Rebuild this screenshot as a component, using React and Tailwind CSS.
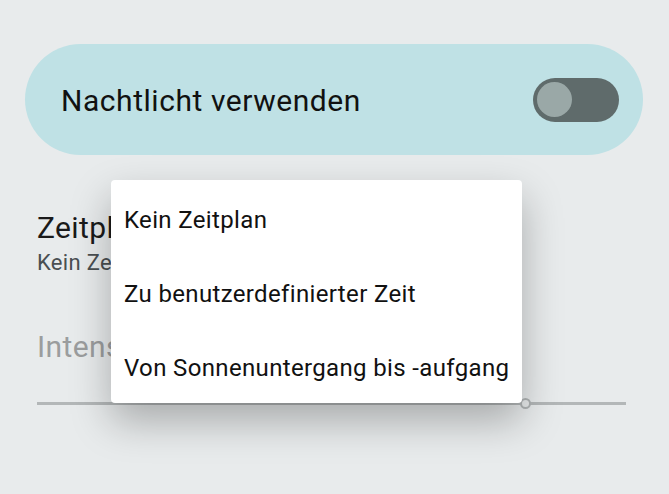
export default function App() {
  return (
    <div
      className="relative h-[494px] w-[669px] overflow-hidden bg-[#e8ebec]"
      style={{ fontFamily: "Roboto, 'Liberation Sans', sans-serif" }}
    >
      <div className="pt-[44px] pl-[25px] pr-[26px]">
        <div className="flex h-[111px] items-center justify-between rounded-[56px] bg-[#bfe1e5] pl-[36px] pr-[24px]">
          <span className="mt-[2px] text-[30px] leading-none tracking-[0.55px] text-[#111]">Nachtlicht verwenden</span>
          <div className="flex h-[44px] w-[86px] items-center rounded-full bg-[#5f6b6b] pl-[4px]">
            <div className="h-[35px] w-[35px] rounded-full bg-[#9aa8a7]" />
          </div>
        </div>
      </div>
      <div className="px-[37px] pt-[58px]">
        <div className="h-[30px] text-[30px] leading-none tracking-[0.4px] text-[#1a1a1a]">Zeitplan</div>
        <div className="mt-[9px] h-[22px] text-[22px] leading-none tracking-[0.3px] text-[#4a4f52]">Kein Zeitplan</div>
        <div className="mt-[58px] h-[30px] text-[30px] leading-none tracking-[0.4px] text-[#9b9d9e]">Intensität</div>
        <div className="relative mt-[40px] h-[3px] w-[589px] bg-[#b3b7b8]">
          <div className="absolute left-[483px] top-[-4px] h-[11px] w-[11px] rounded-full border-[2px] border-[#b0b4b5] bg-[#e8ebec]" />
        </div>
      </div>
      <div className="absolute left-[111px] top-[180px] flex h-[223px] w-[411px] flex-col gap-[50px] rounded-[4px] bg-white pl-[13px] pt-[28px] shadow-[0_18px_40px_rgba(0,0,0,0.28)]">
        <div className="text-[24px] leading-none tracking-[0.35px] text-[#111]">Kein Zeitplan</div>
        <div className="text-[24px] leading-none tracking-[0.35px] text-[#111]">Zu benutzerdefinierter Zeit</div>
        <div className="text-[24px] leading-none tracking-[0.35px] text-[#111]">Von Sonnenuntergang bis -aufgang</div>
      </div>
    </div>
  );
}
